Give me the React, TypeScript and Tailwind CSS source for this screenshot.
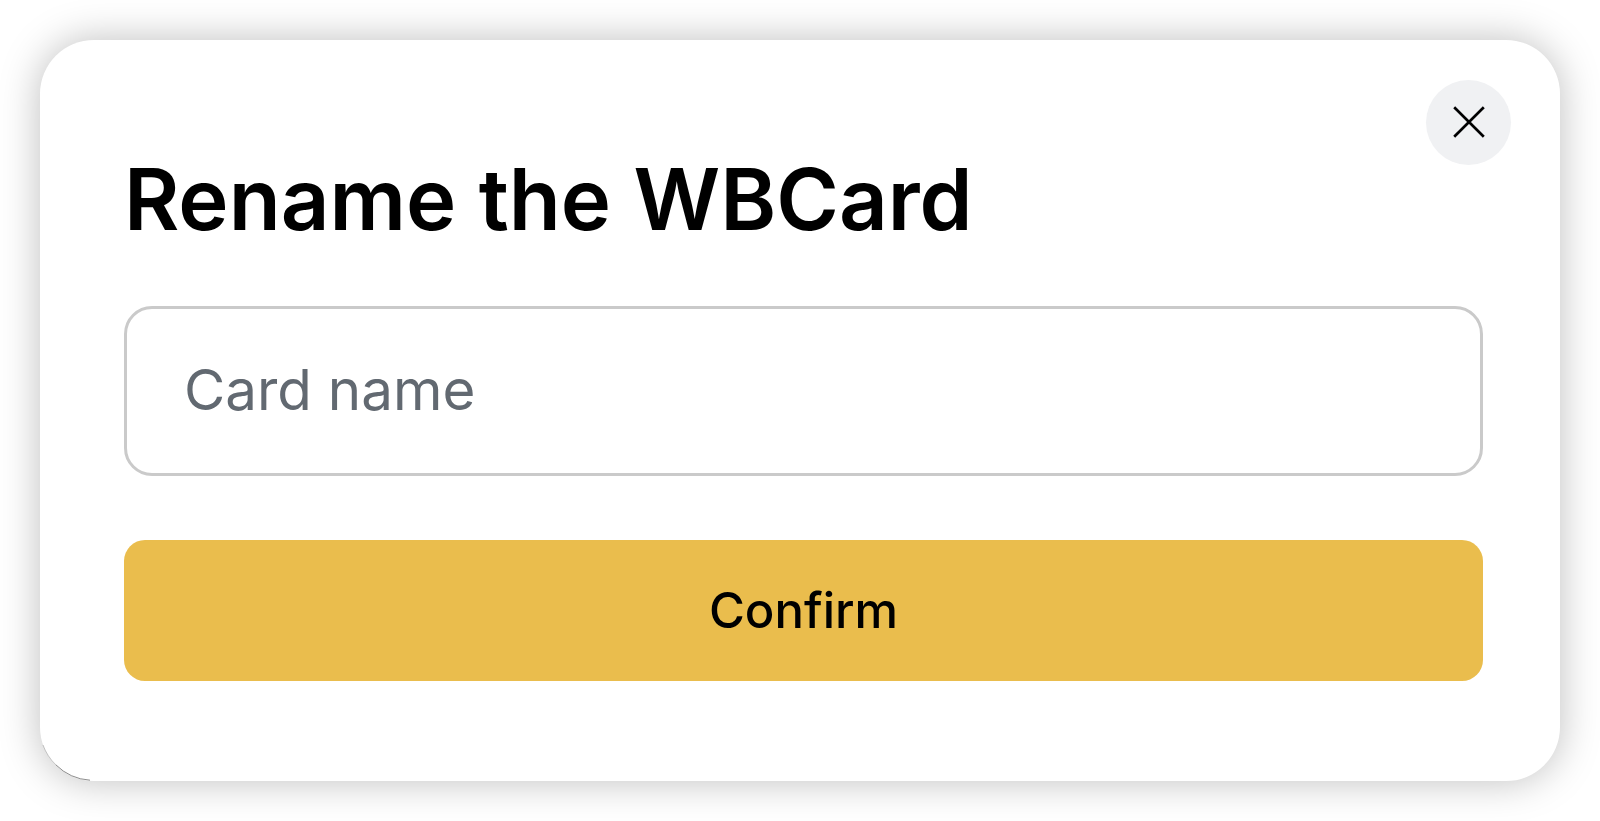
import React, { useState } from 'react';

const CloseIcon: React.FC = () => (
  <svg width="32" height="32" viewBox="0 0 32 32" fill="none" stroke="#000" strokeWidth="2.7">
    <path d="M1.2 1.2L30.8 30.8M30.8 1.2L1.2 30.8" />
  </svg>
);

// thin dark edge along the bottom left corner of the card
const CornerEdge: React.FC = () => (
  <svg className="absolute bottom-0 left-0" width="54" height="54" viewBox="0 0 54 54" fill="none" stroke="#555" strokeWidth="0.9">
    <path d="M3 18A53.5 53.5 0 0 0 15.8 37.8" opacity="0.35" />
    <path d="M15.8 37.8A53.5 53.5 0 0 0 50 53.2" opacity="0.75" />
  </svg>
);

export default function App() {
  const [name, setName] = useState('');

  return (
    <div className="w-[1600px] h-[821px] overflow-hidden bg-white p-10 font-['Inter',sans-serif] text-black">
      <div className="relative w-[1520px] h-[740.5px] rounded-[54px] bg-white px-[84px] pt-[108px] shadow-[0_0_40px_rgba(0,0,0,0.26)]">
        <button
          aria-label="Close"
          className="absolute right-[48.6px] top-[39.5px] flex size-[85px] items-center justify-center rounded-full bg-[#f0f1f3]"
        >
          <CloseIcon />
        </button>
        <h2 className="h-[104px] text-[85px] leading-[104px] font-semibold whitespace-nowrap [word-spacing:1px]">
          Rename the WBCard
        </h2>
        <input
          value={name}
          onChange={(e) => setName(e.target.value)}
          placeholder="Card name"
          className="mt-[54px] block h-[170px] w-[1359px] rounded-[28px] border-[3px] border-[#cacaca] px-[57px] pb-[4px] text-[56.5px] placeholder:text-[#626971]"
        />
        <button className="mt-[63.5px] block h-[141.5px] w-[1359px] rounded-[21px] bg-[#eabd4d] text-[49px] font-medium">
          Confirm
        </button>
        <CornerEdge />
      </div>
    </div>
  );
}
